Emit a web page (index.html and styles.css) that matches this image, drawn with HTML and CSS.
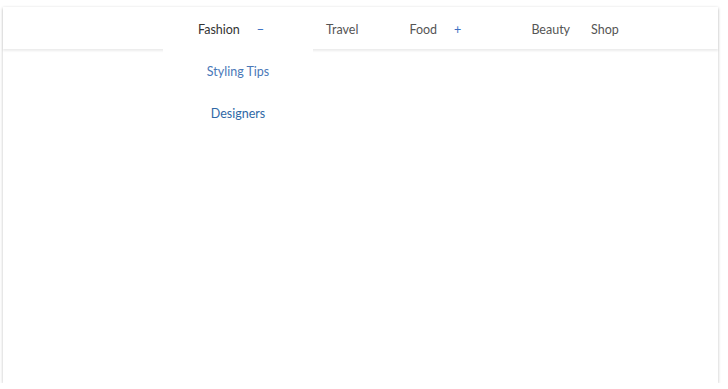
FILE: index.html
```html
<!DOCTYPE html>
<html lang="en">
<head>
  <meta charset="UTF-8">
  <meta name="viewport" content="width=device-width, initial-scale=1.0">
  <title>Menu</title>
  <link rel="stylesheet" href="styles.css">
</head>
<body>
  <div class="card">
    <nav class="nav">
      <div class="nav-group open">
        <span class="nav-label">Fashion</span>
        <span class="toggle">&minus;</span>
        <div class="sub-menu">
          <a class="sub-item">Styling Tips</a>
          <a class="sub-item dark">Designers</a>
        </div>
      </div>
      <a class="nav-link">Travel</a>
      <div class="nav-group food">
        <span class="nav-label">Food</span>
        <span class="toggle">+</span>
      </div>
      <a class="nav-link beauty">Beauty</a>
      <a class="nav-link">Shop</a>
    </nav>
  </div>
</body>
</html>
```

FILE: styles.css
```css
body{
  margin: 0;
  background: #fff;
  font-family: Lato, "Open Sans", sans-serif;
  font-size: 12.5px;
}

.card{
  margin: 7px 0 0 3px;
  width: 715px;
  height: 376px;
  background: #fff;
  box-shadow: 0 1px 3px rgba(0, 0, 0, 0.25);
}

.nav{
  display: flex;
  align-items: center;
  height: 42px;
  padding-left: 160px;
  box-shadow: 0 2px 2px rgba(0, 0, 0, 0.08);
  position: relative;
}

.nav-group{
  position: relative;
  display: flex;
  align-items: center;
  width: 150px;
  height: 100%;
  padding-left: 35px;
  padding-top: 3px;
  box-sizing: border-box;
}

.nav-group.food{
  width: 144px;
  margin-left: 4px;
}

.nav-label{
  color: #555;
}

.nav-group.open{
  background: #fff;
  z-index: 2;
}

.nav-group.open .nav-label{
  color: #333;
}

.toggle{
  margin-left: 17px;
  color: #3a6fc4;
}

.nav-link{
  padding: 3px 12px 0 13px;
  color: #555;
  cursor: pointer;
}

.nav-link.beauty{
  padding-right: 8px;
}

.sub-menu{
  position: absolute;
  top: 100%;
  left: 0;
  width: 150px;
  padding-top: 2px;
  background: #fff;
  display: flex;
  flex-direction: column;
}

.sub-item{
  height: 42px;
  line-height: 42px;
  text-align: center;
  color: #4a78b8;
  cursor: pointer;
}

.sub-item.dark{
  color: #2f68a6;
}
```
